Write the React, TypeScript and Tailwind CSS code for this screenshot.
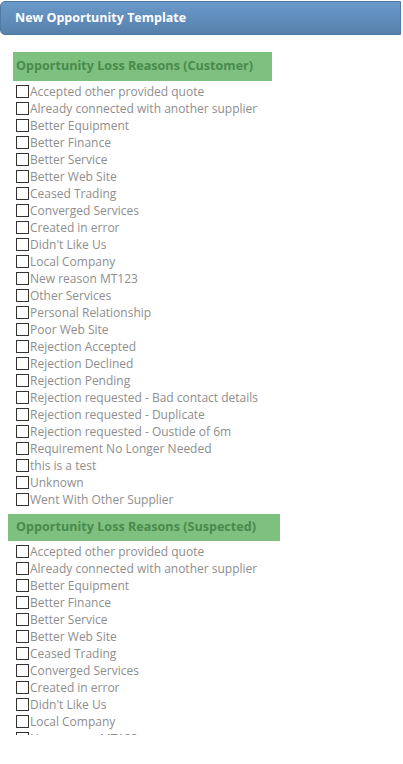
const reasons = [
  "Accepted other provided quote",
  "Already connected with another supplier",
  "Better Equipment",
  "Better Finance",
  "Better Service",
  "Better Web Site",
  "Ceased Trading",
  "Converged Services",
  "Created in error",
  "Didn't Like Us",
  "Local Company",
  "New reason MT123",
  "Other Services",
  "Personal Relationship",
  "Poor Web Site",
  "Rejection Accepted",
  "Rejection Declined",
  "Rejection Pending",
  "Rejection requested - Bad contact details",
  "Rejection requested - Duplicate",
  "Rejection requested - Oustide of 6m",
  "Requirement No Longer Needed",
  "this is a test",
  "Unknown",
  "Went With Other Supplier",
];

function ReasonList() {
  return (
    <div className="flex flex-col">
      {reasons.map((r) => (
        <label key={r} className="flex items-center h-[17px] pl-[16px]">
          <span className="w-[13px] h-[13px] border border-[#333] bg-white shrink-0" />
          <span className="ml-px text-[12px] text-[#8e8e8e] whitespace-nowrap leading-none">{r}</span>
        </label>
      ))}
    </div>
  );
}

export default function App() {
  return (
    <div className="w-[403px] h-[764px] bg-white font-['Open_Sans',sans-serif]">
      <div className="mt-px w-[401px] h-[34px] rounded-l-[5px] border border-[#4f79a3] bg-gradient-to-b from-[#6a9acb] to-[#5781ac] flex items-center pl-[14px]">
        <span className="text-white font-bold text-[12.5px]">New Opportunity Template</span>
      </div>
      <div className="h-[700px] overflow-hidden">
        <div className="mt-[17px] ml-[13px] w-[259px] h-[29px] bg-[#7dc07f] flex items-center pl-[3px]">
          <span className="text-[#4a8a4c] font-bold text-[12.6px]">Opportunity Loss Reasons (Customer)</span>
        </div>
        <div className="mt-[2px]">
          <ReasonList />
        </div>
        <div className="mt-[6px] ml-[8px] w-[272px] h-[27px] bg-[#7dc07f] flex items-center pl-[8px]">
          <span className="text-[#4a8a4c] font-bold text-[12.6px]">Opportunity Loss Reasons (Suspected)</span>
        </div>
        <div className="mt-[2px]">
          <ReasonList />
        </div>
      </div>
    </div>
  );
}
